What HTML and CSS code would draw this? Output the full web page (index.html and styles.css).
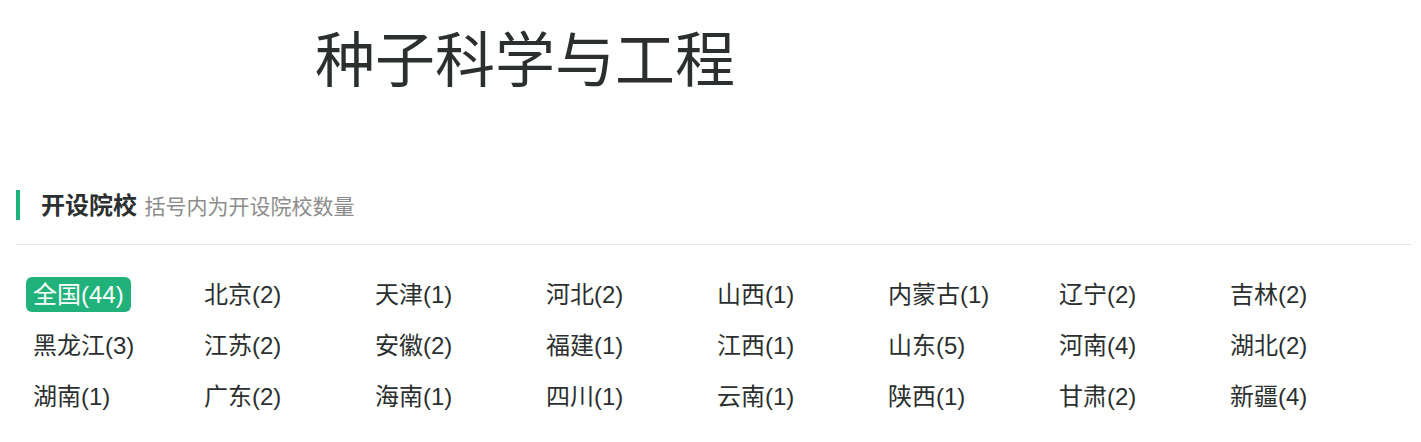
FILE: index.html
```html
<!DOCTYPE html>
<html>

<head>
    <meta charset="utf-8">
    <meta name="viewport" content="width=device-width, initial-scale=1">
    <title>种子科学与工程</title>
    <link rel="stylesheet" href="styles.css">
</head>

<body>
    <h1 class="major-title">种子科学与工程</h1>

    <div class="section">
        <div class="section-head">
            <b>开设院校</b>
            <span class="hint">括号内为开设院校数量</span>
        </div>
        <ul class="regions">
            <li><a class="active" href="#">全国(44)</a></li>
            <li><a href="#">北京(2)</a></li>
            <li><a href="#">天津(1)</a></li>
            <li><a href="#">河北(2)</a></li>
            <li><a href="#">山西(1)</a></li>
            <li><a href="#">内蒙古(1)</a></li>
            <li><a href="#">辽宁(2)</a></li>
            <li><a href="#">吉林(2)</a></li>
            <li><a href="#">黑龙江(3)</a></li>
            <li><a href="#">江苏(2)</a></li>
            <li><a href="#">安徽(2)</a></li>
            <li><a href="#">福建(1)</a></li>
            <li><a href="#">江西(1)</a></li>
            <li><a href="#">山东(5)</a></li>
            <li><a href="#">河南(4)</a></li>
            <li><a href="#">湖北(2)</a></li>
            <li><a href="#">湖南(1)</a></li>
            <li><a href="#">广东(2)</a></li>
            <li><a href="#">海南(1)</a></li>
            <li><a href="#">四川(1)</a></li>
            <li><a href="#">云南(1)</a></li>
            <li><a href="#">陕西(1)</a></li>
            <li><a href="#">甘肃(2)</a></li>
            <li><a href="#">新疆(4)</a></li>
        </ul>
    </div>
</body>

</html>
```

FILE: styles.css
```css
body {
    margin: 0;
    padding: 0 10px 0 16px;
    background-color: #fff;
    color: #2b2f2f;
    font-family: "Liberation Sans", Arial, "Noto Sans CJK SC", sans-serif;
}

.major-title {
    margin: 0;
    padding: 26px 0 0 299px;
    height: 168px;
    box-sizing: border-box;
    font-size: 60px;
    font-weight: normal;
    line-height: 72px;
}

.section-head {
    border-left: 4px solid #1fb27a;
    padding-left: 21px;
    height: 30px;
    line-height: 32px;
    margin-top: 22px;
}

.section-head b {
    font-size: 24px;
}

.section-head .hint {
    margin-left: 3px;
    font-size: 21px;
    color: #8c8c8c;
}

.regions {
    list-style: none;
    margin: 24px 0 0;
    padding: 32px 17px 0 10px;
    border-top: 1px solid #e3e6ec;
    display: grid;
    grid-template-columns: repeat(8, 1fr);
    row-gap: 16px;
}

.regions a {
    display: inline-block;
    padding: 0 7px;
    height: 35px;
    line-height: 35px;
    border-radius: 6px;
    font-size: 24px;
    color: #2b2f2f;
    text-decoration: none;
}

.regions a.active {
    background-color: #20b27a;
    color: #fff;
}
```
